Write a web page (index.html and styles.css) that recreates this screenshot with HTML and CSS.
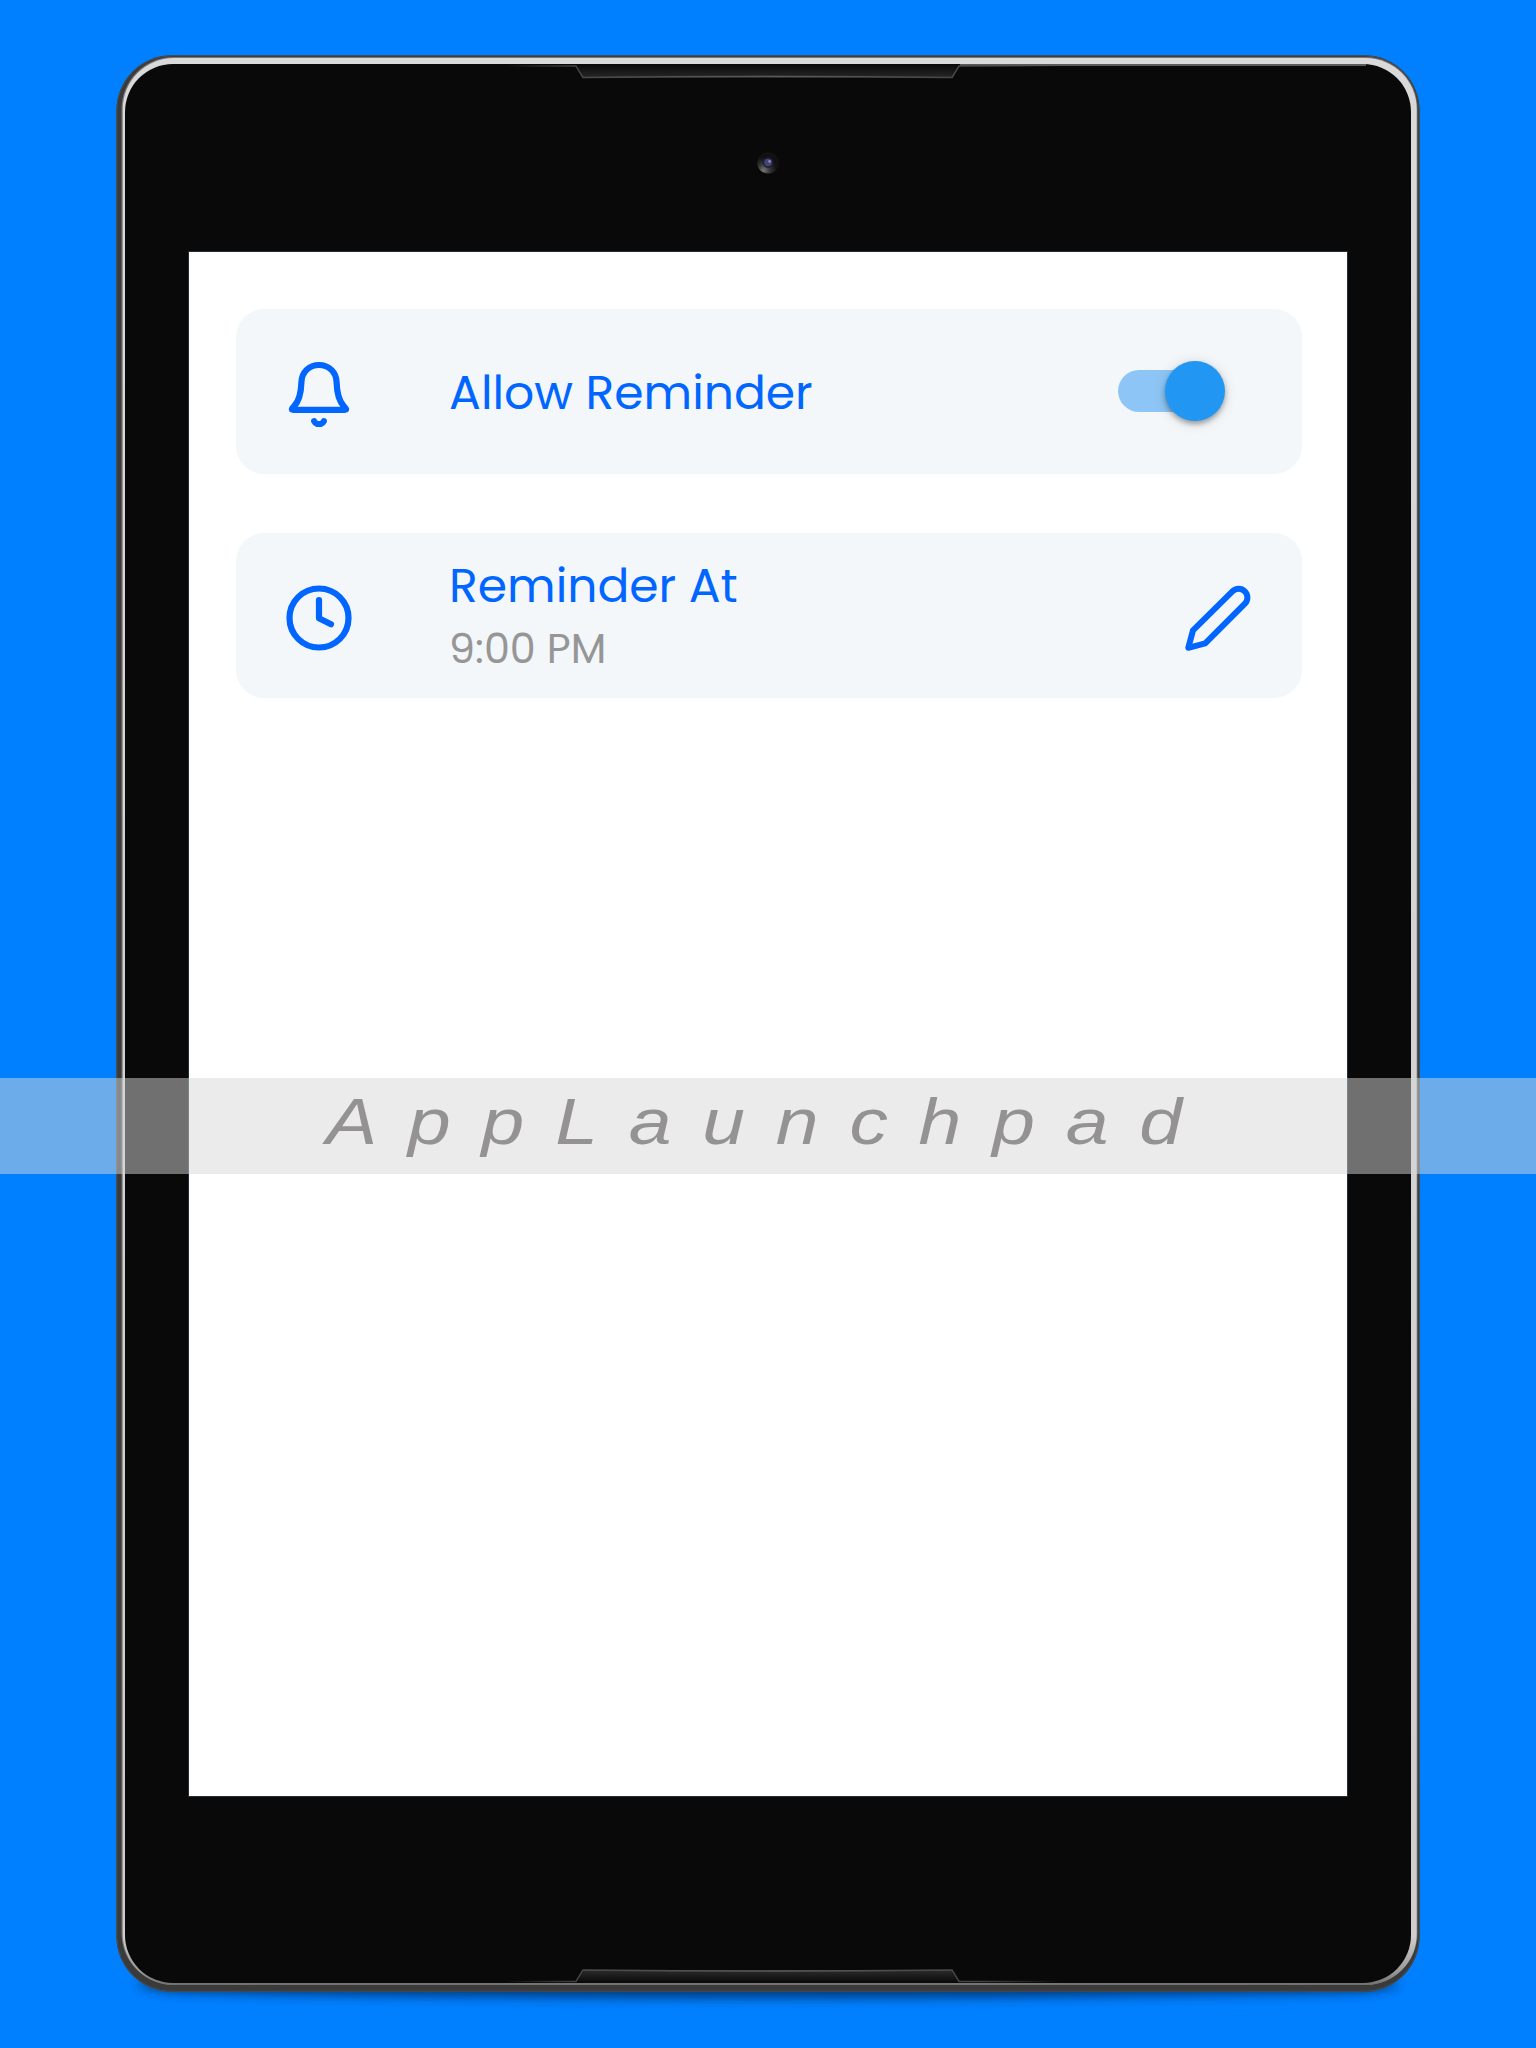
FILE: index.html
```html
<!DOCTYPE html>
<html lang="en">
<head>
<meta charset="utf-8">
<title>Reminder</title>
<link rel="stylesheet" href="styles.css">
</head>
<body>
<div class="stage">
  <div class="tablet">
    <svg class="frame" viewBox="116 55 1304 1993" aria-hidden="true">
      <defs>
        <linearGradient id="metal" x1="0" y1="0" x2="0" y2="1">
          <stop offset="0" stop-color="#d9d9d9"/>
          <stop offset=".975" stop-color="#cfcecd"/>
          <stop offset=".993" stop-color="#999"/>
          <stop offset="1" stop-color="#707070"/>
        </linearGradient>
        <linearGradient id="lip" gradientUnits="userSpaceOnUse" x1="505" y1="0" x2="1060" y2="0">
          <stop offset="0" stop-color="#555" stop-opacity="0"/>
          <stop offset=".15" stop-color="#4a4a4a"/>
          <stop offset=".5" stop-color="#5c5c5c"/>
          <stop offset=".85" stop-color="#444"/>
          <stop offset="1" stop-color="#555" stop-opacity="0"/>
        </linearGradient>
        <linearGradient id="slot" x1="0" y1="0" x2="0" y2="1">
          <stop offset="0" stop-color="#0a0a0a"/>
          <stop offset="1" stop-color="#262626"/>
        </linearGradient>
        <linearGradient id="slotUp" x1="0" y1="1" x2="0" y2="0">
          <stop offset="0" stop-color="#0a0a0a"/>
          <stop offset="1" stop-color="#2a2a2a"/>
        </linearGradient>
        <radialGradient id="lens" cx=".3" cy=".85" r=".6">
          <stop offset="0" stop-color="#777"/>
          <stop offset=".5" stop-color="#333"/>
          <stop offset="1" stop-color="#111"/>
        </radialGradient>
        <filter id="soft" x="-10%" y="-200%" width="120%" height="500%"><feGaussianBlur stdDeviation="5.5"/></filter>
      </defs>
      <path d="M136 1982H1400Q1396 1992 1340 1993Q768 2003 200 1993Q140 1992 136 1982Z" fill="#002f66" opacity=".85" filter="url(#soft)"/>
      <rect x="116.4" y="55.3" width="1303.2" height="1936.4" rx="55" fill="#3a3a3a"/>
      <rect x="116.9" y="55.8" width="1302.2" height="1935.4" rx="54.5" fill="none" stroke="#4c4c4c"/>
      <rect x="121.5" y="57" width="1296" height="1928" rx="52" fill="#777"/>
      <rect x="122.7" y="58" width="1294" height="1927" rx="51" fill="url(#metal)"/>
      <rect x="125" y="64" width="1286" height="1919" rx="48" fill="#090909"/>
      <path d="M960 65H1366" stroke="#777" stroke-width="1.5"/>
      <path d="M577 64.5L584 77.5H951L958 64.5Z" fill="url(#slot)"/>
      <path d="M505 66H576L583 77.5Q768 75.5 952 77.5L959 66H1060" fill="none" stroke="url(#lip)" stroke-width="1.6"/>
      <path d="M577 1982.5L584 1970.5H951L958 1982.5Z" fill="url(#slotUp)"/>
      <path d="M505 1981.5H576L583 1970Q768 1972 952 1970L959 1981.5H1060" fill="none" stroke="url(#lip)" stroke-width="1.6"/>
      <circle cx="768" cy="162.8" r="10.8" fill="url(#lens)"/>
      <circle cx="768.2" cy="162.5" r="5.3" fill="#1d1d33"/>
      <circle cx="768" cy="162.5" r="3.8" fill="#434375"/>
      <circle cx="769.6" cy="161.4" r="1.4" fill="#9088c0"/>
    </svg>
    <main class="screen">
      <section class="card">
        <svg class="icon" viewBox="0 0 66 66" aria-hidden="true">
          <path d="M33 4C43 4 50.300 11.300 50.600 21.300C50.900 32 52.500 39.300 57.700 45C61.200 48.700 60.300 48.800 58.500 48.800H7.500C5.700 48.800 4.800 48.700 8.300 45C13.500 39.300 15.100 32 15.400 21.300C15.700 11.300 23 4 33 4Z"/>
          <path d="M28.200 60.200C30 64.200 36 64.200 37.800 60.200"/>
        </svg>
        <div class="label"><h2 class="title">Allow Reminder</h2></div>
        <div class="switch"><span class="knob"></span></div>
      </section>
      <section class="card">
        <svg class="icon" viewBox="0 0 66 66" aria-hidden="true">
          <circle cx="33" cy="33" r="29.500"/>
          <path d="M33 15V33.300L45 39.200"/>
        </svg>
        <div class="label">
          <h2 class="title">Reminder At</h2>
          <p class="time">9:00 PM</p>
        </div>
        <svg class="icon edit" viewBox="0 0 66 66" aria-hidden="true">
          <path d="M3.300 62.800L8 45.400L47.400 6.400A8.700 8.700 0 0 1 59.900 18.700L20.200 58.300Z"/>
        </svg>
      </section>
    </main>
  </div>
  <div class="watermark"><span class="mark">AppLaunchpad</span></div>
</div>
</body>
</html>
```
FILE: styles.css
```css
* { box-sizing: border-box; }
body { margin: 0; background: #0080ff; }
.stage {
  position: relative;
  width: 1536px;
  height: 2048px;
  padding: 55px 116px 0;
  overflow: hidden;
  font-family: Poppins, Inter, "Open Sans", sans-serif;
}
.tablet {
  position: relative;
  width: 1304px;
  height: 1937px;
  padding: 196px 72px 0;
}
.frame {
  position: absolute;
  left: 0;
  top: 0;
  width: 1304px;
  height: 1993px;
}
.screen {
  position: relative;
  display: flex;
  flex-direction: column;
  gap: 59px;
  width: 1160px;
  height: 1546px;
  padding: 56.500px 45.500px 0 46.700px;
  background: #fff;
  border: 1px solid #22303a;
}
.card {
  display: flex;
  align-items: center;
  height: 165.300px;
  padding: 0 50.500px 0 50px;
  background: #f3f7fa;
  border-radius: 28px;
}
.icon {
  flex: none;
  width: 66px;
  height: 66px;
  margin-top: 5.500px;
  fill: none;
  stroke: #0066ff;
  stroke-width: 6.200;
  stroke-linecap: round;
  stroke-linejoin: round;
}
.edit { stroke-width: 6; }
.label { flex: 1; padding: 3.500px 0 0 97.400px; }
.title {
  margin: 0;
  font-size: 47.200px;
  line-height: 64px;
  font-weight: 400;
  color: #0066ff;
  white-space: nowrap;
}
.time {
  margin: 0;
  font-size: 41.300px;
  line-height: 62px;
  font-weight: 400;
  color: #969696;
}
.switch {
  width: 107px;
  height: 42px;
  margin-right: 26px;
  display: flex;
  align-items: center;
  justify-content: flex-end;
  background: linear-gradient(90deg, #8dc6f6 80px, transparent 80px);
  border-radius: 21px;
}
.knob {
  flex: none;
  width: 60px;
  height: 60px;
  border-radius: 50%;
  background: #2196f3;
  box-shadow: 0 3px 5px rgba(0, 0, 0, .3), 0 2px 14px rgba(0, 0, 0, .14);
}
.watermark {
  position: absolute;
  left: 0;
  top: 1078.300px;
  width: 1536px;
  height: 96px;
  padding-left: 326px;
  background: rgba(215, 215, 215, .5);
}
.mark {
  display: inline-block;
  font: italic 64px/88px "Liberation Sans", Arial, sans-serif;
  letter-spacing: 25.700px;
  color: #949292;
  transform: scaleX(1.2);
  transform-origin: 0 0;
}
```
